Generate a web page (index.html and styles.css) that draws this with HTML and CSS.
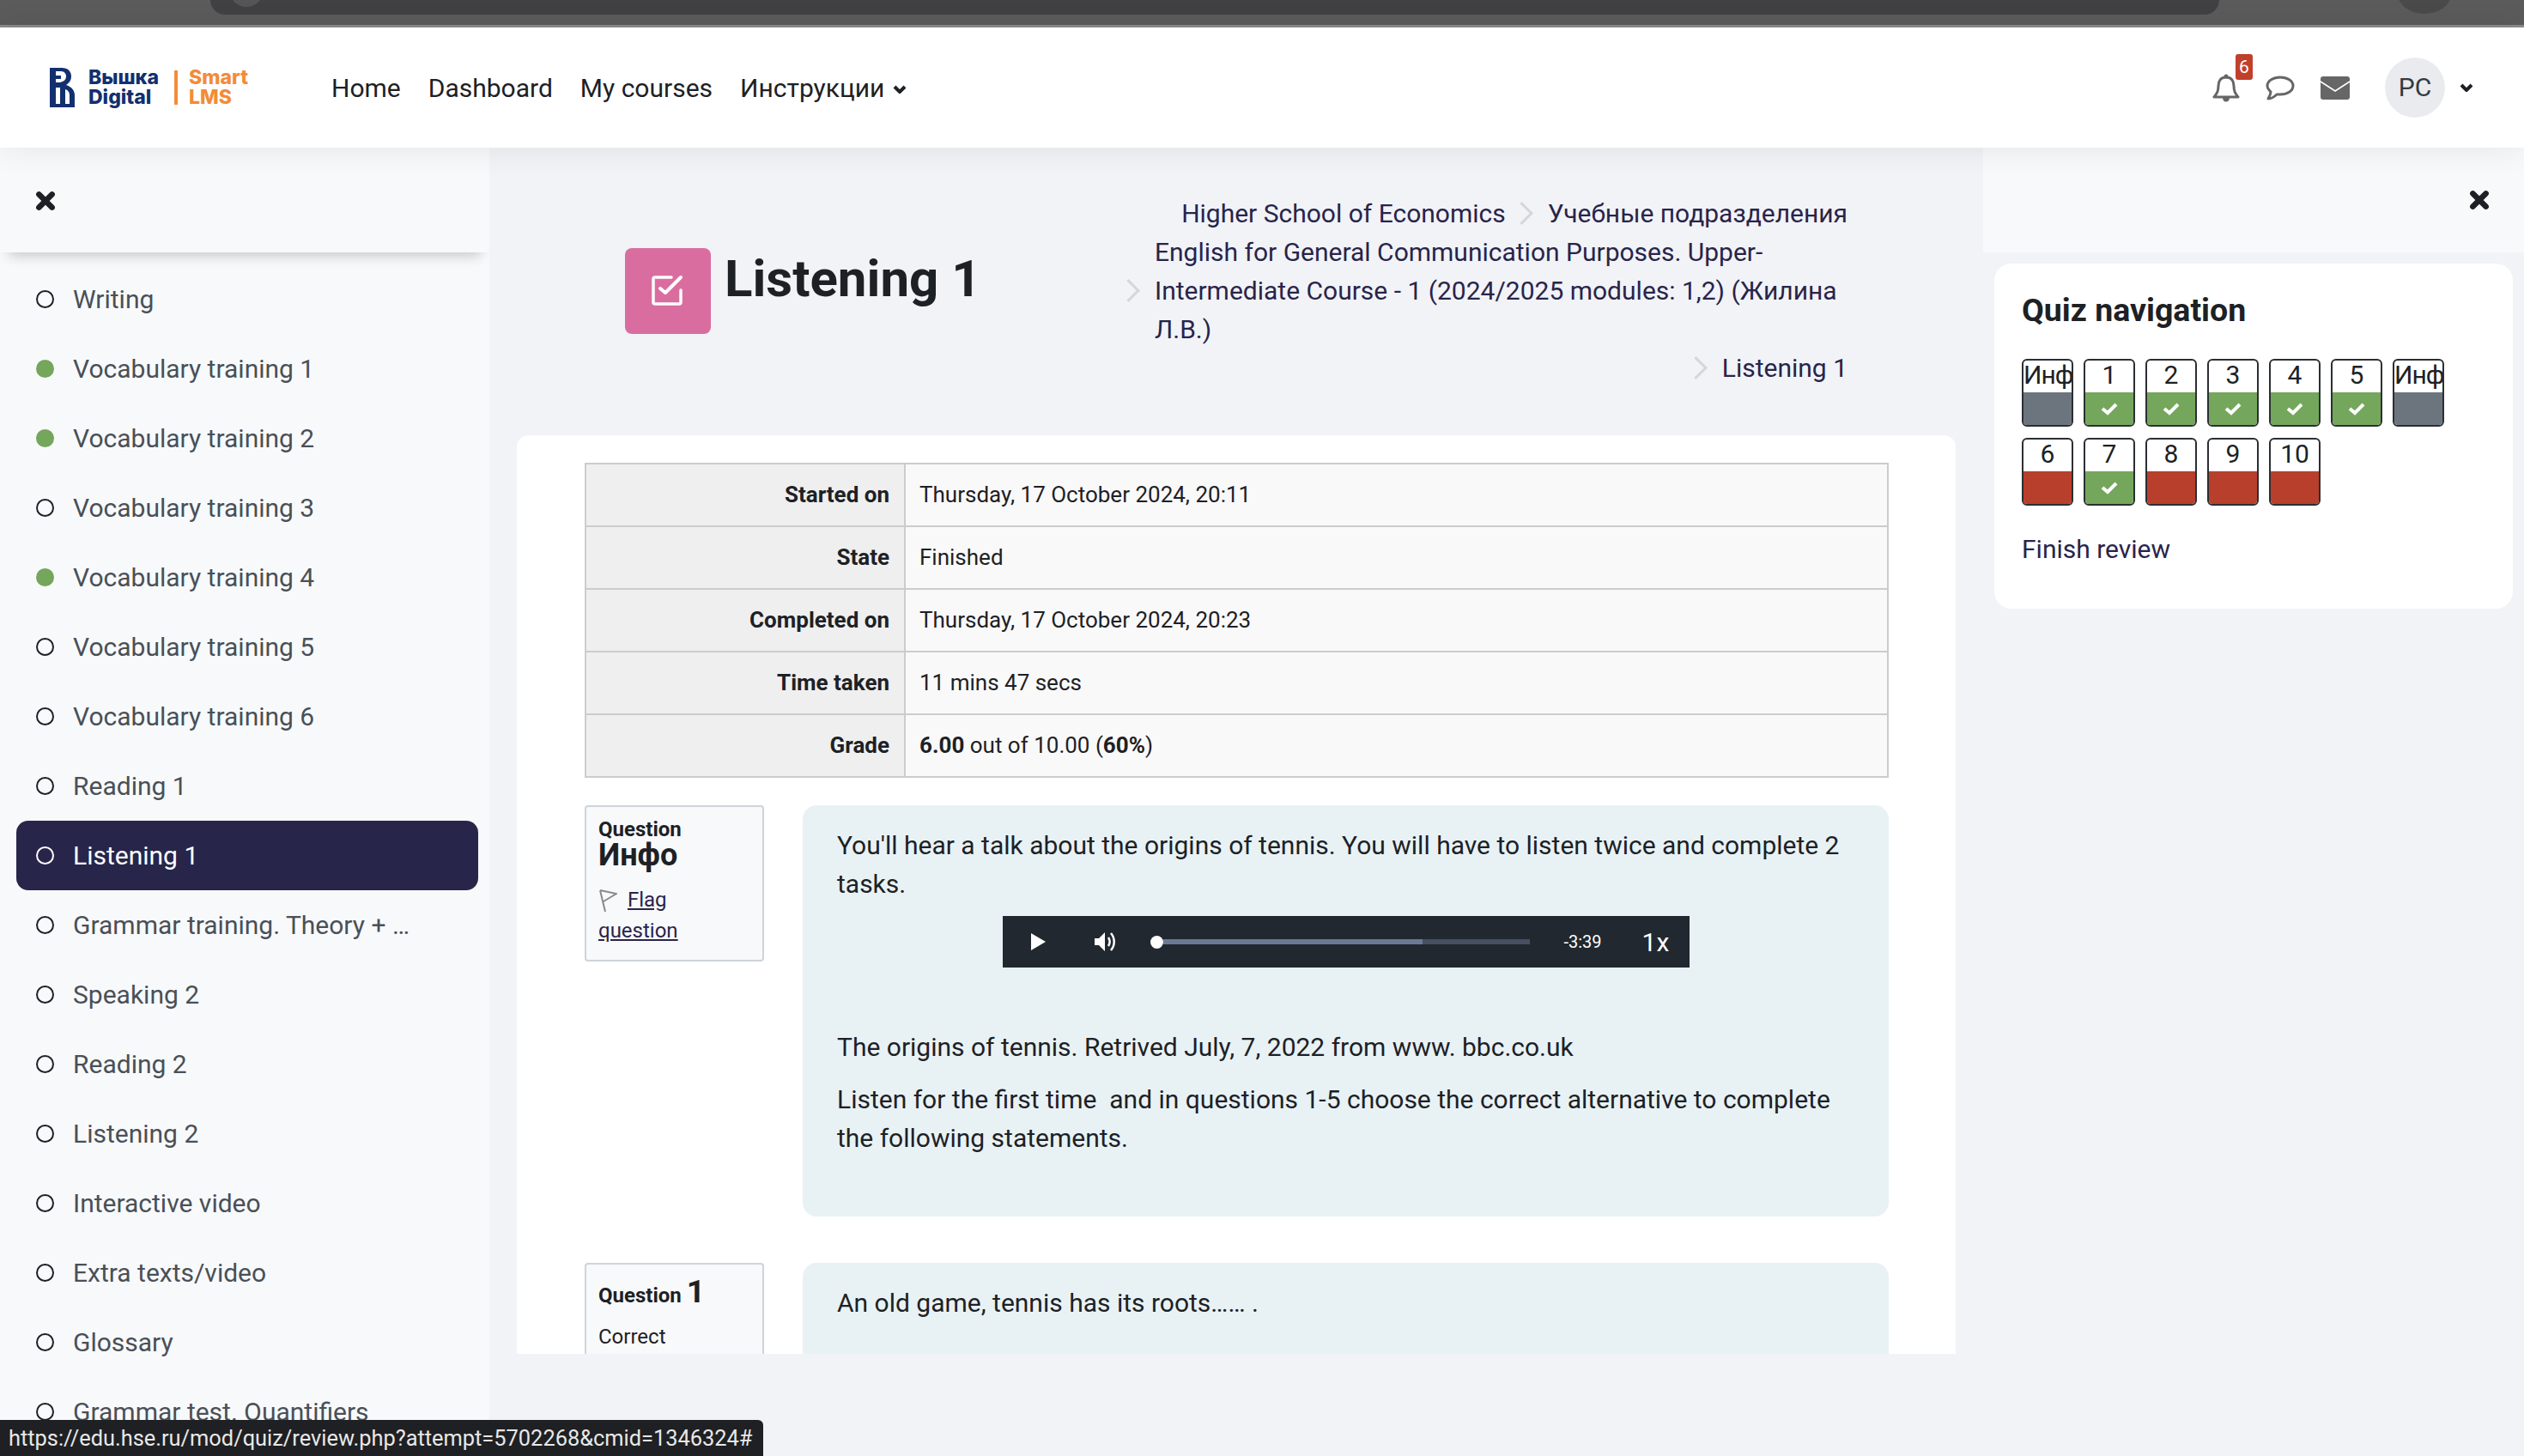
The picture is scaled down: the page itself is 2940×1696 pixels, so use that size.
FILE: index.html
```html
<!DOCTYPE html>
<html lang="en">

<head>
  <meta charset="UTF-8">
  <title>Listening 1: review</title>
  <link rel="stylesheet" href="styles.css">
</head>

<body>
  <div class="browser-strip">
    <div class="address-bar"><span class="address-dot"></span></div>
    <span class="profile-dot"></span>
  </div>

  <header class="navbar">
    <a class="logo" href="#">
      <svg class="logo-mark" viewBox="0 0 29 46">
        <path fill="#12306f" fill-rule="evenodd" d="M0 0H14C21 0 25 4 25 10C25 15 22 18 19 20C25 22 29 26 29 32V46H0ZM7 4V9H13V13H7V17H12C16 16 19 14 19 10C19 7 17 4 13 4ZM7 23V42H12V23ZM18 25V42H23V32C23 28 21 26 18 25Z" />
      </svg>
      <span class="logo-name">Вышка<br>Digital</span>
      <span class="logo-divider"></span>
      <span class="logo-product">Smart<br>LMS</span>
    </a>
    <nav class="main-nav">
      <a href="#">Home</a>
      <a href="#">Dashboard</a>
      <a href="#">My courses</a>
      <a href="#">Инструкции
        <svg class="chevron" viewBox="0 0 16 10"><path d="M2 2l6 6 6-6" /></svg>
      </a>
    </nav>
    <div class="user-nav">
      <span class="icon-bell">
        <svg width="32" height="33" viewBox="0 0 32 33">
          <path d="M16 4C10 4 7 8 7 14C7 21 5 23 2 27H30C27 23 25 21 25 14C25 8 22 4 16 4Z" fill="none" stroke="#666" stroke-width="3" stroke-linejoin="round" />
          <circle cx="16" cy="3" r="2.5" fill="#666" />
          <path d="M12 28a4 4.500 0 0 0 8 0Z" fill="#666" />
        </svg>
        <span class="badge">6</span>
      </span>
      <svg class="icon-chat" width="34" height="29" viewBox="0 0 34 29">
        <path d="M17 2C9 2 2 6 2 12C2 15 4 17 6 19C6 22 4 25 3 27C7 27 11 24 13 22C14 22 16 22 17 22C25 22 32 18 32 12C32 6 25 2 17 2Z" fill="none" stroke="#666" stroke-width="3" stroke-linejoin="round" />
      </svg>
      <svg class="icon-mail" width="34" height="27" viewBox="0 0 34 27">
        <rect width="34" height="27" rx="3" fill="#666" />
        <path d="M0 6L17 17L34 6" fill="none" stroke="#fff" stroke-width="1.500" />
      </svg>
      <span class="avatar">PC</span>
      <svg class="chevron chevron-user" viewBox="0 0 16 10"><path d="M2 2l6 6 6-6" /></svg>
    </div>
  </header>

  <div class="layout">
    <aside class="course-index">
      <div class="index-head">
        <svg class="close-icon" viewBox="0 0 22 22"><path d="M4 4L18 18M18 4L4 18" /></svg>
      </div>
      <ul class="index-list">
        <li class="index-item"><span class="dot"></span>Writing</li>
        <li class="index-item"><span class="dot done"></span>Vocabulary training 1</li>
        <li class="index-item"><span class="dot done"></span>Vocabulary training 2</li>
        <li class="index-item"><span class="dot"></span>Vocabulary training 3</li>
        <li class="index-item"><span class="dot done"></span>Vocabulary training 4</li>
        <li class="index-item"><span class="dot"></span>Vocabulary training 5</li>
        <li class="index-item"><span class="dot"></span>Vocabulary training 6</li>
        <li class="index-item"><span class="dot"></span>Reading 1</li>
        <li class="index-item active"><span class="dot"></span>Listening 1</li>
        <li class="index-item"><span class="dot"></span>Grammar training. Theory + …</li>
        <li class="index-item"><span class="dot"></span>Speaking 2</li>
        <li class="index-item"><span class="dot"></span>Reading 2</li>
        <li class="index-item"><span class="dot"></span>Listening 2</li>
        <li class="index-item"><span class="dot"></span>Interactive video</li>
        <li class="index-item"><span class="dot"></span>Extra texts/video</li>
        <li class="index-item"><span class="dot"></span>Glossary</li>
        <li class="index-item"><span class="dot"></span>Grammar test. Quantifiers</li>
      </ul>
    </aside>

    <main class="main-area">
      <div class="page-head">
        <div class="page-title">
          <span class="quiz-icon">
            <svg width="40" height="40" viewBox="0 0 40 40">
              <path d="M24 4H5a2 2 0 0 0-2 2V33a2 2 0 0 0 2 2H33a2 2 0 0 0 2-2V19" fill="none" stroke="#fff" stroke-width="3.500" stroke-linecap="round" />
              <path d="M11 17L17 22L35 4" fill="none" stroke="#fff" stroke-width="4" stroke-linecap="round" stroke-linejoin="round" />
            </svg>
          </span>
          <h1>Listening 1</h1>
        </div>
        <ol class="breadcrumb">
          <li><a href="#">Higher School of Economics</a></li>
          <li class="crumb-sep"><a href="#">Учебные подразделения</a></li>
          <li class="crumb-sep crumb-long"><a href="#">English for General Communication Purposes. Upper-Intermediate Course - 1 (2024/2025 modules: 1,2) (Жилина Л.В.)</a></li>
          <li class="crumb-sep"><a href="#">Listening 1</a></li>
        </ol>
      </div>

      <section class="content-card">
        <table class="summary">
          <tr><th>Started on</th><td>Thursday, 17 October 2024, 20:11</td></tr>
          <tr><th>State</th><td>Finished</td></tr>
          <tr><th>Completed on</th><td>Thursday, 17 October 2024, 20:23</td></tr>
          <tr><th>Time taken</th><td>11 mins 47 secs</td></tr>
          <tr><th>Grade</th><td><b>6.00</b> out of 10.00 (<b>60%</b>)</td></tr>
        </table>

        <div class="question">
          <div class="q-info">
            <div class="q-label">Question</div>
            <div class="q-number">Инфо</div>
            <div class="q-flag">
              <svg width="22" height="28" viewBox="0 0 22 28">
                <path d="M2 2L8 27M2 2L21 6L6 15" fill="none" stroke="#8a8a8a" stroke-width="2" />
              </svg>
              <a href="#">Flag question</a>
            </div>
          </div>
          <div class="q-body q-body-first">
            <p class="q-line">You'll hear a talk about the origins of tennis. You will have to listen twice and complete 2 tasks.</p>
            <div class="audio">
              <svg class="audio-play" width="17" height="20" viewBox="0 0 17 20"><path d="M0 0L17 10L0 20Z" fill="#fff" /></svg>
              <svg class="audio-volume" width="28" height="28" viewBox="0 0 28 28">
                <path d="M1 10H6L13 3V25L6 18H1Z" fill="#fff" />
                <path d="M17 9C19 12 19 16 17 19M20 4C25 10 25 18 20 24" fill="none" stroke="#fff" stroke-width="2.500" />
              </svg>
              <span class="audio-handle"></span>
              <span class="audio-track"><span class="audio-buffer"></span></span>
              <span class="audio-time">-3:39</span>
              <span class="audio-speed">1x</span>
            </div>
            <p class="q-source">The origins of tennis. Retrived July, 7, 2022 from www. bbc.co.uk</p>
            <p class="q-line">Listen for the first time&nbsp; and in questions 1-5 choose the correct alternative to complete the following statements.</p>
          </div>
        </div>

        <div class="question question-next">
          <div class="q-info">
            <div class="q-label q-label-row">Question <span class="q-number-inline">1</span></div>
            <div class="q-state">Correct</div>
          </div>
          <div class="q-body">
            <p class="q-line">An old game, tennis has its roots…… .</p>
          </div>
        </div>
      </section>
    </main>

    <aside class="drawer">
      <div class="drawer-head">
        <svg class="close-icon" viewBox="0 0 22 22"><path d="M4 4L18 18M18 4L4 18" /></svg>
      </div>
      <div class="quiz-nav">
        <h2>Quiz navigation</h2>
        <div class="nav-grid">
          <span class="nav-btn info"><span class="nav-num">Инф</span><span class="nav-state"></span></span>
          <span class="nav-btn ok"><span class="nav-num">1</span><span class="nav-state"><svg viewBox="0 0 20 16"><path d="M2 8L8 13L18 3" /></svg></span></span>
          <span class="nav-btn ok"><span class="nav-num">2</span><span class="nav-state"><svg viewBox="0 0 20 16"><path d="M2 8L8 13L18 3" /></svg></span></span>
          <span class="nav-btn ok"><span class="nav-num">3</span><span class="nav-state"><svg viewBox="0 0 20 16"><path d="M2 8L8 13L18 3" /></svg></span></span>
          <span class="nav-btn ok"><span class="nav-num">4</span><span class="nav-state"><svg viewBox="0 0 20 16"><path d="M2 8L8 13L18 3" /></svg></span></span>
          <span class="nav-btn ok"><span class="nav-num">5</span><span class="nav-state"><svg viewBox="0 0 20 16"><path d="M2 8L8 13L18 3" /></svg></span></span>
          <span class="nav-btn info"><span class="nav-num">Инф</span><span class="nav-state"></span></span>
          <span class="nav-btn bad"><span class="nav-num">6</span><span class="nav-state"></span></span>
          <span class="nav-btn ok"><span class="nav-num">7</span><span class="nav-state"><svg viewBox="0 0 20 16"><path d="M2 8L8 13L18 3" /></svg></span></span>
          <span class="nav-btn bad"><span class="nav-num">8</span><span class="nav-state"></span></span>
          <span class="nav-btn bad"><span class="nav-num">9</span><span class="nav-state"></span></span>
          <span class="nav-btn bad"><span class="nav-num">10</span><span class="nav-state"></span></span>
        </div>
        <a class="finish-link" href="#">Finish review</a>
      </div>
    </aside>
  </div>

  <div class="status-bar">https://edu.hse.ru/mod/quiz/review.php?attempt=5702268&amp;cmid=1346324#</div>
</body>

</html>
```

FILE: styles.css
```css
* {
  box-sizing: border-box;
}

body {
  margin: 0;
  height: 100vh;
  overflow: hidden;
  background-color: #f1f3f7;
  color: #1d2125;
  font-family: Roboto, 'Liberation Sans', sans-serif;
  font-size: 30px;
  line-height: 45px;
}

a {
  color: inherit;
  text-decoration: none;
}

p {
  margin: 0;
}

/* browser chrome left at the top of the shot */
.browser-strip {
  display: flex;
  height: 32px;
  padding-left: 245px;
  background-color: #5b5b5b;
  border-bottom: 3px solid #8a8a8a;
}

.address-bar {
  width: 2340px;
  height: 17px;
  padding-left: 22px;
  overflow: hidden;
  background-color: #414042;
  border-radius: 0 0 28px 28px;
}

.address-dot {
  display: block;
  width: 40px;
  height: 40px;
  margin-top: -32px;
  background-color: #555;
  border-radius: 50%;
}

.profile-dot {
  width: 62px;
  height: 46px;
  margin: -30px 0 0 208px;
  background-color: #4a4a4a;
  border-radius: 50%;
}

/* top navbar */
.navbar {
  position: relative;
  z-index: 3;
  display: flex;
  align-items: center;
  height: 140px;
  padding: 0 59px 0 58px;
  background-color: #fff;
  box-shadow: 0 2px 36px rgba(0, 0, 0, 0.08);
}

.logo {
  display: flex;
  align-items: center;
  width: 328px;
  height: 46px;
}

.logo-mark {
  width: 29px;
  height: 46px;
  margin-right: 16px;
}

.logo-name,
.logo-product {
  font-family: Inter, sans-serif;
  font-size: 23px;
  font-weight: 800;
  line-height: 23px;
}

.logo-name {
  width: 100px;
  color: #12306f;
}

.logo-divider {
  width: 4px;
  height: 40px;
  margin-right: 13px;
  background-color: #f28c38;
}

.logo-product {
  color: #f28c38;
}

.main-nav {
  display: flex;
  gap: 32px;
}

.chevron {
  width: 16px;
  height: 10px;
  margin-left: 2px;
  vertical-align: 4px;
}

.chevron path {
  fill: none;
  stroke: #1d2125;
  stroke-width: 4;
}

.user-nav {
  display: flex;
  align-items: center;
  margin-left: auto;
}

.icon-bell {
  position: relative;
  display: flex;
  width: 32px;
  height: 33px;
  margin-right: 30px;
}

.badge {
  position: absolute;
  top: -23px;
  left: 27px;
  width: 20px;
  height: 30px;
  background-color: #c0402c;
  border-radius: 3px;
  color: #fff;
  font-size: 21px;
  line-height: 30px;
  text-align: center;
}

.icon-chat {
  margin-right: 30px;
}

.icon-mail {
  margin-right: 41px;
}

.avatar {
  width: 70px;
  height: 70px;
  margin-right: 17px;
  background-color: #e9ebef;
  border-radius: 50%;
  color: #343a40;
  line-height: 70px;
  text-align: center;
}

.chevron-user {
  margin-left: 0;
}

/* three columns under the navbar */
.layout {
  display: grid;
  grid-template-columns: 570px 1fr 630px;
  height: 1524px;
}

.course-index {
  overflow: hidden;
  background-color: #f8f9fb;
}

.index-head {
  position: relative;
  z-index: 2;
  display: flex;
  align-items: center;
  height: 122px;
  padding: 2px 0 0 41px;
  background-color: #f8f9fb;
  box-shadow: 0 14px 14px -10px rgba(0, 0, 0, 0.2);
}

.close-icon {
  width: 24px;
  height: 24px;
}

.close-icon path {
  fill: none;
  stroke: #1d2125;
  stroke-width: 6;
  stroke-linecap: round;
}

.index-list {
  margin: 0;
  padding: 14px 13px 0 19px;
  list-style: none;
}

.index-item {
  display: flex;
  align-items: center;
  gap: 22px;
  height: 81px;
  padding-left: 23px;
  border-radius: 14px;
  color: #495057;
}

.index-item.active {
  background-color: #27264a;
  color: #fff;
}

.dot {
  width: 21px;
  height: 21px;
  border: 2px solid #1d2125;
  border-radius: 50%;
}

.dot.done {
  background-color: #74a65c;
  border-color: #74a65c;
}

.active .dot {
  border-color: #fff;
}

/* page heading and breadcrumbs */
.main-area {
  padding: 0 32px;
}

.page-head {
  display: flex;
  justify-content: space-between;
  height: 335px;
  padding: 0 126px;
}

.page-title {
  display: flex;
  gap: 16px;
  padding-top: 117px;
}

.quiz-icon {
  display: flex;
  align-items: center;
  justify-content: center;
  width: 100px;
  height: 100px;
  background-color: #da6d9f;
  border-radius: 8px;
}

h1 {
  margin: 0;
  font-size: 60px;
  font-weight: 700;
  line-height: 72px;
}

.breadcrumb {
  display: flex;
  flex-wrap: wrap;
  justify-content: flex-end;
  align-content: flex-start;
  width: 856px;
  margin: 0;
  padding: 54px 0 0;
  list-style: none;
  color: #29244a;
}

.crumb-sep {
  display: flex;
  align-items: center;
}

.crumb-sep::before {
  content: '';
  flex-shrink: 0;
  width: 16px;
  height: 16px;
  margin: 0 21px 0 9px;
  border-top: 3px solid #d3d7db;
  border-right: 3px solid #d3d7db;
  transform: rotate(45deg);
}

.crumb-long {
  width: 856px;
}

/* white card */
.content-card {
  height: 1070px;
  padding: 32px 78px 0 79px;
  overflow: hidden;
  background-color: #fff;
  border-radius: 14px 14px 0 0;
}

.summary {
  width: 100%;
  border-collapse: collapse;
  border: 2px solid #ccc;
  border-top-color: #dee2e6;
  font-size: 26px;
  line-height: 36px;
}

.summary tr {
  height: 73px;
}

.summary th,
.summary td {
  padding: 0 16px 2px;
  border: 2px solid #ccc;
}

.summary th {
  width: 372px;
  padding-right: 17px;
  background-color: #efefef;
  font-weight: 700;
  text-align: right;
}

.summary td {
  background-color: #f9f9f9;
}

.summary b {
  font-weight: 700;
}

.question {
  display: flex;
  gap: 45px;
  margin-top: 32px;
}

.question-next {
  margin-top: 54px;
}

.q-info {
  flex-shrink: 0;
  align-self: flex-start;
  width: 209px;
  padding: 11px 14px 16px;
  background-color: #f8f9fa;
  border: 2px solid #ced4da;
  border-radius: 4px;
  font-size: 24px;
  line-height: 30px;
}

.q-label {
  font-weight: 700;
}

.q-number {
  margin: 0 0 19px;
  font-size: 36px;
  font-weight: 700;
  line-height: 30px;
}

.q-label-row {
  padding-top: 5px;
}

.q-number-inline {
  font-size: 37.5px;
  font-weight: 700;
}

.q-state {
  margin-top: 18px;
  height: 60px;
}

.q-flag {
  color: #29244a;
  line-height: 36px;
}

.q-flag svg {
  margin-right: 6px;
  vertical-align: -7px;
}

.q-flag a {
  text-decoration: underline;
}

.q-body {
  flex: 1;
  padding: 24px 40px 69px;
  background-color: #e8f2f5;
  border-radius: 16px;
}

/* audio player */
.audio {
  display: flex;
  align-items: center;
  width: 800px;
  height: 60px;
  margin: 15px auto 0;
  padding-left: 33px;
  background-color: #212830;
  color: #fff;
}

.audio-volume {
  margin-left: 56px;
}

.audio-handle {
  width: 15px;
  height: 15px;
  margin-left: 38px;
  background-color: #fff;
  border-radius: 50%;
}

.audio-track {
  width: 427px;
  height: 6px;
  background-color: #465060;
}

.audio-buffer {
  display: block;
  width: 302px;
  height: 6px;
  background-color: #6b7a94;
}

.audio-time {
  margin-left: 40px;
  font-size: 20px;
}

.audio-speed {
  margin-left: 47px;
}

.q-source {
  margin-top: 70px;
  margin-bottom: 16px;
}

/* quiz navigation block */
.drawer-head {
  display: flex;
  align-items: center;
  justify-content: flex-end;
  height: 122px;
  padding-right: 40px;
  background-color: #f8f9fb;
}

.quiz-nav {
  margin: 13px 13px 0;
  padding: 27px 32px 47px;
  background-color: #fff;
  border-radius: 20px;
}

h2 {
  margin: 0 0 30px;
  font-size: 37.5px;
  font-weight: 700;
  line-height: 54px;
}

.nav-grid {
  display: flex;
  flex-wrap: wrap;
  gap: 13px 12px;
}

.nav-btn {
  display: flex;
  flex-direction: column;
  width: 60px;
  height: 79px;
  overflow: hidden;
  background-color: #fff;
  border: 2.500px solid #2b2f33;
  border-radius: 6px;
}

.nav-num {
  height: 37px;
  line-height: 34px;
  text-align: center;
  white-space: nowrap;
}

.info .nav-num {
  letter-spacing: -1px;
}

.nav-state {
  display: flex;
  align-items: center;
  justify-content: center;
  flex: 1;
}

.nav-state svg {
  width: 20px;
  height: 16px;
}

.nav-state path {
  fill: none;
  stroke: #fff;
  stroke-width: 4;
}

.ok .nav-state {
  background-color: #74a65c;
}

.bad .nav-state {
  background-color: #b83f2c;
}

.info .nav-state {
  background-color: #6c757d;
}

.finish-link {
  display: block;
  margin-top: 28px;
  color: #29244a;
}

/* link preview in the bottom corner */
.status-bar {
  position: fixed;
  left: 0;
  bottom: 0;
  width: 889px;
  height: 42px;
  padding-left: 10px;
  background-color: #1f2023;
  border-radius: 0 6px 0 0;
  color: #e8e8e8;
  font-size: 25.4px;
  line-height: 42px;
  white-space: nowrap;
}
```
